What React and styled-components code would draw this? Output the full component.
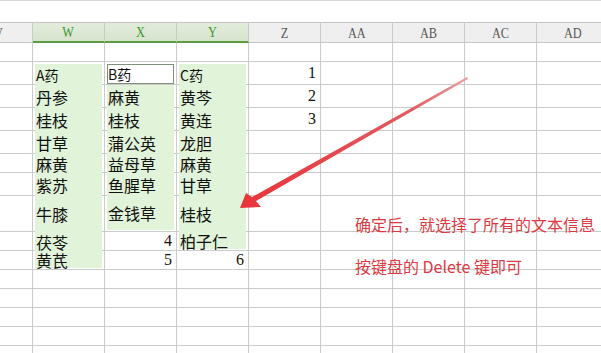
import { createGlobalStyle, styled, css } from "styled-components";

const GlobalStyle = createGlobalStyle`
  body {
    margin: 0;
    background: #fff;
    overflow: hidden;
  }
`;

const COLS = [
  { name: "V", w: 33 },
  { name: "W", w: 72, sel: true },
  { name: "X", w: 72, sel: true },
  { name: "Y", w: 72, sel: true },
  { name: "Z", w: 72 },
  { name: "AA", w: 72 },
  { name: "AB", w: 72 },
  { name: "AC", w: 72 },
  { name: "AD", w: 72 },
];

// each row: height, then cells for W, X, Y, Z  (t = text, f = fill kind, n = number)
const ROWS = [
  { h: 19, cells: [] },
  {
    h: 23,
    cells: [
      { t: "A药", f: "top", small: true },
      { t: "B药", f: "active", small: true },
      { t: "C药", f: "top", small: true },
      { n: "1" },
    ],
  },
  { h: 23, cells: [{ t: "丹参", f: "mid" }, { t: "麻黄", f: "mid" }, { t: "黄芩", f: "mid" }, { n: "2" }] },
  { h: 23, cells: [{ t: "桂枝", f: "mid" }, { t: "桂枝", f: "mid" }, { t: "黄连", f: "mid" }, { n: "3" }] },
  { h: 23, cells: [{ t: "甘草", f: "mid" }, { t: "蒲公英", f: "mid" }, { t: "龙胆", f: "mid" }] },
  { h: 19, cells: [{ t: "麻黄", f: "mid" }, { t: "益母草", f: "mid" }, { t: "麻黄", f: "mid" }] },
  { h: 23, cells: [{ t: "紫苏", f: "mid" }, { t: "鱼腥草", f: "mid" }, { t: "甘草", f: "mid" }] },
  { h: 36, cells: [{ t: "牛膝", f: "mid" }, { t: "金钱草", f: "bot" }, { t: "桂枝", f: "mid" }] },
  { h: 19, cells: [{ t: "茯苓", f: "mid" }, { n: "4" }, { t: "柏子仁", f: "bot" }] },
  { h: 19, cells: [{ t: "黄芪", f: "bot" }, { n: "5" }, { n: "6" }] },
  { h: 19, cells: [] },
  { h: 19, cells: [] },
  { h: 19, cells: [] },
  { h: 19, cells: [] },
  { h: 19, cells: [] },
];

const Sheet = styled.div`
  position: relative;
  width: 601px;
  height: 353px;
  overflow: hidden;
  background: #fff;
`;

const TopStrip = styled.div`
  height: 22px;
  box-sizing: border-box;
  border-top: 1px solid #d8d8d8;
`;

const HeaderRow = styled.div`
  display: flex;
  border-top: 1px solid #c6c6c6;
`;

const HeaderCell = styled.div`
  flex: none;
  width: ${(p) => p.$w}px;
  height: 20px;
  box-sizing: border-box;
  display: flex;
  align-items: center;
  justify-content: center;
  overflow: hidden;
  border-right: 1px solid #cacaca;
  border-bottom: 1px solid #c6c6c6;
  background: #efefef;
  color: #5a5a5a;
  font-family: "Liberation Serif", serif;
  font-size: 15px;
  line-height: 16px;
  ${(p) =>
    p.$sel &&
    css`
      background: linear-gradient(#e3ecdc, #d6e3cd);
      color: #3c952f;
      border-bottom: 2px solid #5e9c42;
      border-right-color: #c3cfbb;
    `}
`;

const HeaderLabel = styled.span`
  display: inline-block;
  transform: scaleX(0.82);
  ${(p) =>
    p.$edge &&
    css`
      margin-left: -36px;
    `}
`;

const Row = styled.div`
  display: flex;
  height: ${(p) => p.$h}px;
`;

const Cell = styled.div`
  flex: none;
  width: ${(p) => p.$w}px;
  height: 100%;
  box-sizing: border-box;
  border-right: 1px solid #cbcbcb;
  border-bottom: 1px solid #cbcbcb;
  display: flex;
  align-items: center;
  justify-content: ${(p) => (p.$num ? "flex-end" : "flex-start")};
  padding-right: ${(p) => (p.$num ? "4px" : "0")};
`;

const fillKinds = {
  top: css`
    margin-top: 2px;
    height: calc(100% - 1px);
  `,
  mid: css`
    height: calc(100% + 1px);
  `,
  bot: css`
    height: calc(100% - 1px);
  `,
  active: css`
    margin-top: 2px;
    height: calc(100% - 2px);
    background: #fff;
    border: 1px solid #7f8f79;
    padding-left: 0;
  `,
};

const Fill = styled.div`
  align-self: flex-start;
  box-sizing: border-box;
  width: calc(100% - 4px);
  margin-left: 2px;
  padding-left: 1px;
  display: flex;
  align-items: center;
  background: #e1f3d8;
  color: #111;
  font-family: "Noto Sans CJK SC", "Liberation Sans", sans-serif;
  font-size: ${(p) => (p.$small ? "14px" : "16px")};
  line-height: 16px;
  white-space: nowrap;
  ${(p) => fillKinds[p.$kind]}
`;

const Num = styled.span`
  font-family: "Liberation Serif", serif;
  font-size: 16px;
  line-height: 16px;
  color: #111;
`;

const Overlay = styled.svg`
  position: absolute;
  left: 0;
  top: 0;
  pointer-events: none;
`;

const Note = styled.div`
  position: absolute;
  left: 355px;
  top: 214px;
  color: #dc3a42;
  font-family: "Noto Sans CJK SC", "Liberation Sans", sans-serif;
  font-size: 16px;
  line-height: 20px;
  white-space: nowrap;
`;

const NoteLine = styled.div`
  & + & {
    margin-top: 22px;
  }
`;

function DataCell({ col, cell }) {
  if (cell && cell.n) {
    return (
      <Cell $w={col.w} $num>
        <Num>{cell.n}</Num>
      </Cell>
    );
  }
  return (
    <Cell $w={col.w}>
      {cell && cell.f && (
        <Fill $kind={cell.f} $small={cell.small}>
          {cell.t}
        </Fill>
      )}
    </Cell>
  );
}

export default function App() {
  return (
    <Sheet>
      <GlobalStyle />
      <TopStrip />
      <HeaderRow>
        {COLS.map((c, i) => (
          <HeaderCell key={c.name} $w={c.w} $sel={c.sel}>
            <HeaderLabel $edge={i === 0}>{c.name}</HeaderLabel>
          </HeaderCell>
        ))}
      </HeaderRow>
      {ROWS.map((r, ri) => (
        <Row key={ri} $h={r.h}>
          {COLS.map((c, ci) => (
            <DataCell key={c.name} col={c} cell={ci >= 1 && ci <= 4 ? r.cells[ci - 1] : null} />
          ))}
        </Row>
      ))}

      <Overlay width="601" height="353" viewBox="0 0 601 353">
        <defs>
          <linearGradient id="arrowFade" x1="467" y1="78" x2="240" y2="207" gradientUnits="userSpaceOnUse">
            <stop offset="0" stopColor="#e9a0a4" />
            <stop offset="0.25" stopColor="#e25a60" />
            <stop offset="1" stopColor="#e8343b" />
          </linearGradient>
        </defs>
        <polygon
          points="467,77 468,79 256,201 261,207 240,208 246,193 252,197"
          fill="url(#arrowFade)"
        />
      </Overlay>

      <Note>
        <NoteLine>确定后，就选择了所有的文本信息</NoteLine>
        <NoteLine>按键盘的 Delete 键即可</NoteLine>
      </Note>
    </Sheet>
  );
}
